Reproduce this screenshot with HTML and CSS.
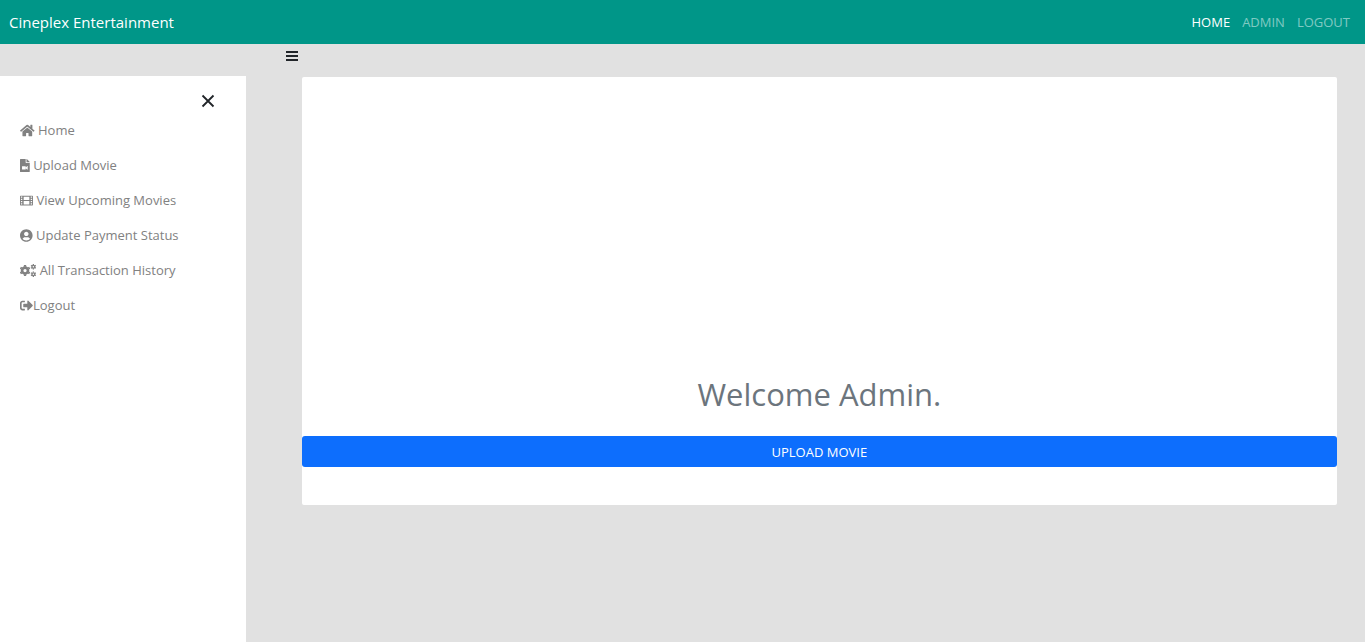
FILE: index.html
```html
<!DOCTYPE html>
<html lang="en">
<head>
<meta charset="utf-8">
<meta name="viewport" content="width=device-width, initial-scale=1">
<title>Cineplex Entertainment</title>
<link rel="stylesheet" href="styles.css">
</head>
<body>
<header class="navbar">
  <a class="brand" href="#">Cineplex Entertainment</a>
  <nav class="nav-links" aria-label="Main">
    <a class="nav-link active" href="#">HOME</a>
    <a class="nav-link" href="#">ADMIN</a>
    <a class="nav-link" href="#">LOGOUT</a>
  </nav>
</header>
<div class="layout">
  <aside class="sidebar">
    <button class="close" type="button" aria-label="Close menu">
      <svg width="14" height="14" viewBox="0 0 14 14"><path d="M1.500 1.500l11 11M12.500 1.500l-11 11" fill="none" stroke="currentColor" stroke-width="1.800"/></svg>
    </button>
    <nav class="menu" aria-label="Admin">
      <a class="menu-link" href="#"><svg class="icon" viewBox="0 0 576 512"><path d="M280.370 148.260L96 300.110V464a16 16 0 0 0 16 16l112.060-.29a16 16 0 0 0 15.920-16V368a16 16 0 0 1 16-16h64a16 16 0 0 1 16 16v95.640a16 16 0 0 0 16 16.050L464 480a16 16 0 0 0 16-16V300L295.670 148.260a12.190 12.190 0 0 0-15.300 0zM571.600 251.470L488 182.560V44.050a12 12 0 0 0-12-12h-56a12 12 0 0 0-12 12v72.610L318.470 43a48 48 0 0 0-61 0L4.340 251.470a12 12 0 0 0-1.600 16.900l25.500 31A12 12 0 0 0 45.150 301l235.220-193.740a12.190 12.190 0 0 1 15.300 0L530.900 301a12 12 0 0 0 16.900-1.600l25.500-31a12 12 0 0 0-1.700-16.930z"/></svg> Home</a>
      <a class="menu-link" href="#"><svg class="icon" viewBox="0 0 384 512"><path fill-rule="evenodd" d="M224 136V0H24C10.700 0 0 10.700 0 24v464c0 13.300 10.700 24 24 24h336c13.300 0 24-10.700 24-24V160H248c-13.200 0-24-10.800-24-24zM384 122v6H256V0h6c6.400 0 12.500 2.500 17 7l98 98c4.500 4.500 7 10.600 7 17zM304 290v118c0 14-16 20-26 10l-54-50v32c0 9-7 16-16 16H96c-9 0-16-7-16-16V300c0-9 7-16 16-16h112c9 0 16 7 16 16v32l54-50c10-10 26-4 26 8z"/></svg> Upload Movie</a>
      <a class="menu-link" href="#"><svg class="icon" viewBox="0 0 512 512"><path fill-rule="evenodd" d="M24 64H488q24 0 24 24V424q0 24-24 24H24q-24 0-24-24V88q0-24 24-24zM36 98v48h54v-48zM36 188v48h54v-48zM36 278v48h54v-48zM36 368v48h54v-48zM422 98v48h54v-48zM422 188v48h54v-48zM422 278v48h54v-48zM422 368v48h54v-48zM144 104v132h224V104zM144 278v132h224V278z"/></svg> View Upcoming Movies</a>
      <a class="menu-link" href="#"><svg class="icon" viewBox="0 0 496 512"><path d="M248 8C111 8 0 119 0 256s111 248 248 248 248-111 248-248S385 8 248 8zm0 96c48.600 0 88 39.400 88 88s-39.400 88-88 88-88-39.400-88-88 39.400-88 88-88zm0 344c-58.700 0-111.300-26.600-146.500-68.200 18.800-35.400 55.600-59.800 98.500-59.800 2.400 0 4.800.4 7.100 1.100 13 4.200 26.600 6.900 40.900 6.900 14.300 0 28-2.700 40.900-6.900 2.300-.7 4.700-1.100 7.100-1.100 42.900 0 79.700 24.400 98.500 59.800C359.300 421.400 306.700 448 248 448z"/></svg> Update Payment Status</a>
      <a class="menu-link" href="#"><svg class="icon" viewBox="0 0 640 512" fill="none" stroke="currentColor"><circle cx="198" cy="256" r="116" stroke-width="104"/><path stroke-width="90" d="M198 44v60M198 408v60M14 150l52 30M330 332l52 30M14 362l52-30M330 180l52-30"/><circle cx="526" cy="110" r="56" stroke-width="52"/><circle cx="526" cy="402" r="56" stroke-width="52"/><path stroke-width="50" d="M526 2v40M526 178v40M432 56l34 20M586 144l34 20M432 164l34-20M586 76l34-20M526 294v40M526 470v40M432 348l34 20M586 436l34 20M432 456l34-20M586 368l34-20"/></svg> All Transaction History</a>
      <a class="menu-link" href="#"><svg class="icon" viewBox="0 0 512 512"><path d="M497 273L329 441c-15 15-41 4.500-41-17v-96H152c-13.300 0-24-10.700-24-24v-96c0-13.300 10.700-24 24-24h136V88c0-21.400 25.900-32 41-17l168 168c9.300 9.400 9.300 24.600 0 34zM192 436v-40c0-6.600-5.400-12-12-12H96c-17.700 0-32-14.300-32-32V160c0-17.700 14.300-32 32-32h84c6.600 0 12-5.400 12-12V76c0-6.600-5.400-12-12-12H96c-53 0-96 43-96 96v192c0 53 43 96 96 96h84c6.600 0 12-5.400 12-12z"/></svg>Logout</a>
    </nav>
  </aside>
  <main class="main">
    <button class="toggle" type="button" aria-label="Open menu">
      <svg width="12" height="10" viewBox="0 0 12 10"><path d="M0 0h12v2H0zM0 4h12v2H0zM0 8h12v2H0z" fill="currentColor"/></svg>
    </button>
    <section class="card">
      <h1 class="title">Welcome Admin.</h1>
      <button class="upload" type="button">UPLOAD MOVIE</button>
    </section>
  </main>
</div>
</body>
</html>
```
FILE: styles.css
```css
* {
  box-sizing: border-box;
}

body {
  display: flex;
  flex-direction: column;
  min-height: 100vh;
  margin: 0;
  background: #e1e1e1;
  color: #212529;
  font-family: "Segoe UI", "Open Sans", sans-serif;
  font-size: 13px;
  line-height: 20px;
}

a {
  text-decoration: none;
}

button {
  border: 0;
  padding: 0;
  background: none;
  color: inherit;
  font: inherit;
  cursor: pointer;
}

svg {
  display: block;
}

.navbar {
  display: flex;
  align-items: center;
  justify-content: space-between;
  min-height: 44px;
  padding: 0 15px 0 9px;
  background: #009688;
}

.brand {
  color: #fff;
  font-size: 15px;
}

.nav-links {
  display: flex;
  gap: 12px;
}

.nav-link {
  color: rgba(255, 255, 255, 0.5);
}

.nav-link.active {
  color: #fff;
}

.layout {
  display: flex;
  flex: 1;
}

.sidebar {
  flex: 0 0 18%;
  display: flex;
  flex-direction: column;
  margin-top: 32px;
  padding: 18px 0;
  background: #fff;
}

.close {
  align-self: flex-end;
  margin-right: 31px;
}

.menu {
  display: flex;
  flex-direction: column;
  gap: 15px;
  padding: 12px 20px;
}

.menu-link {
  color: #818181;
}

.icon {
  display: inline-block;
  height: 13px;
  vertical-align: -2px;
  fill: currentColor;
}

.icon[fill="none"] {
  fill: none;
}

.main {
  flex: 1;
  display: flex;
  flex-direction: column;
  padding: 7px 28px 0 40px;
}

.toggle {
  align-self: flex-start;
  padding-bottom: 16px;
}

.card {
  display: flex;
  flex-direction: column;
  margin-left: 16px;
  padding: 293px 0 38px;
  border-radius: 2px;
  background: #fff;
}

.title {
  margin: 0 0 18px;
  color: #6c757d;
  font-size: 31px;
  font-weight: 400;
  line-height: 48px;
  text-align: center;
}

.upload {
  min-height: 31px;
  border-radius: 3px;
  background: #0d6efd;
  color: #fff;
}
```
